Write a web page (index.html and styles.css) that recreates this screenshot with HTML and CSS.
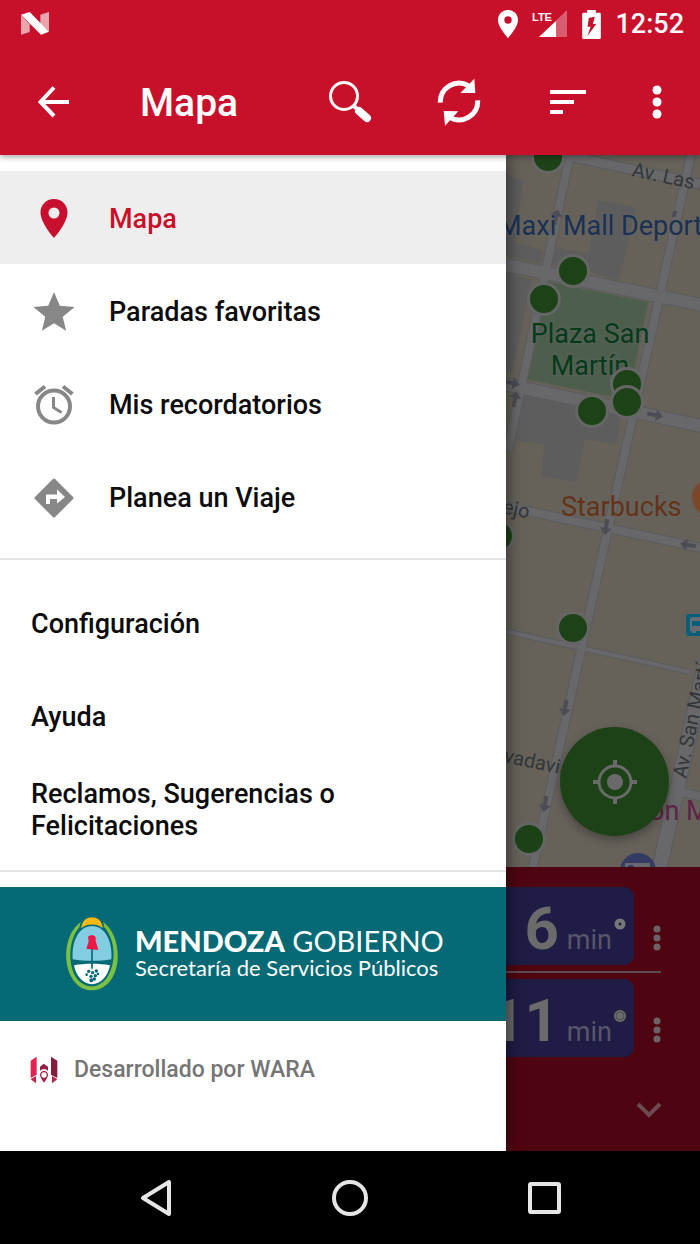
FILE: index.html
```html
<!DOCTYPE html>
<html lang="es">
<head>
<meta charset="UTF-8">
<meta name="viewport" content="width=device-width, initial-scale=1">
<title>Mapa</title>
<link rel="stylesheet" href="styles.css">
</head>
<body>
<header class="header">
  <div class="statusbar">
    <svg class="notif" width="28" height="24" viewBox="0 0 84 72" aria-hidden="true">
      <path d="M0 10 26 36V60L0 68Z M58 8 84 0V58L58 36Z" fill="#fff" opacity=".62"/>
      <path d="M0 8 26 0 84 59 60 68Z" fill="#fff"/>
    </svg>
    <div class="status-icons">
      <svg width="20" height="28" viewBox="0 0 60 84" aria-hidden="true"><path fill="#fff" fill-rule="evenodd" d="M30 0C13 0 0 13 0 30c0 22 30 54 30 54s30-32 30-54C60 13 47 0 30 0zm0 19a11 11 0 1 1 0 22 11 11 0 0 1 0-22z"/></svg>
      <svg class="signal" width="36" height="28" viewBox="0 0 36 28" aria-hidden="true">
        <path d="M35 0V27H7Z" fill="#fff" opacity=".32"/>
        <path d="M24 11V27H7Z" fill="#fff"/>
        <text class="lte" x="0" y="11">LTE</text>
      </svg>
      <svg width="19" height="29" viewBox="0 0 56 87" aria-hidden="true"><path fill="#fff" fill-rule="evenodd" d="M15 0H41V8H52Q56 8 56 12V83Q56 87 52 87H4Q0 87 0 83V12Q0 8 4 8H15ZM38 20 20 24 16 50H25L16 78 42 42H32Z"/></svg>
      <span class="clock">12:52</span>
    </div>
  </div>
  <div class="toolbar">
    <button class="tool back" type="button" aria-label="Volver">
      <svg width="32" height="32" viewBox="0 0 32 32"><path d="M31 16H3M16 1.500 2.500 16 16 30" fill="none" stroke="#fff" stroke-width="4"/></svg>
    </button>
    <h1 class="title">Mapa</h1>
    <button class="tool" type="button" aria-label="Buscar">
      <svg width="44" height="44" viewBox="0 0 44 44"><circle cx="16" cy="16" r="13.500" fill="none" stroke="#fff" stroke-width="3"/><path d="M25 25 30 30" stroke="#fff" stroke-width="4"/><path d="M31 31 39 38" stroke="#fff" stroke-width="8" stroke-linecap="round"/></svg>
    </button>
    <button class="tool" type="button" aria-label="Actualizar">
      <svg width="44" height="48" viewBox="0 0 132 144"><path d="M10 74A56 56 0 0 1 94 23M122 67A56 56 0 0 1 38 118" fill="none" stroke="#fff" stroke-width="15"/><path d="M112 2 115 45H70Z M20 99 64 100 24 143Z" fill="#fff"/></svg>
    </button>
    <button class="tool" type="button" aria-label="Ordenar">
      <svg width="36" height="26" viewBox="0 0 36 26"><path d="M0 3H36M0 13H24M0 23H13" stroke="#fff" stroke-width="4"/></svg>
    </button>
    <button class="tool more" type="button" aria-label="Más opciones">
      <svg width="10" height="34" viewBox="0 0 10 34" fill="#fff"><circle cx="5" cy="5" r="4.500"/><circle cx="5" cy="17" r="4.500"/><circle cx="5" cy="29" r="4.500"/></svg>
    </button>
  </div>
</header>

<main class="content">
  <aside class="drawer">
    <nav class="menu">
      <a class="item active" href="#mapa">
        <svg class="icon" viewBox="0 0 42 42"><path fill="#c8102e" fill-rule="evenodd" d="M21 1C13 1 7.500 7 7.500 14.500 7.500 25 21 40 21 40S34.500 25 34.500 14.500C34.500 7 29 1 21 1zm0 8.500a5.500 5.500 0 1 1 0 11 5.500 5.500 0 0 1 0-11z"/></svg>
        Mapa
      </a>
      <a class="item" href="#favoritas">
        <svg class="icon" viewBox="0 0 24 24"><path fill="#878787" d="M12 18.400 18.900 22.700 17 14.700 23.800 9.100 15.300 8.400 12 .5 8.700 8.400.2 9.100 7 14.700 5.100 22.700Z"/></svg>
        Paradas favoritas
      </a>
      <a class="item" href="#recordatorios">
        <svg class="icon" viewBox="0 0 42 42" fill="none" stroke="#878787"><circle cx="21" cy="22.500" r="16" stroke-width="4"/><path d="M20.500 13V23.500L28.500 28.500" stroke-width="3"/><path d="M2.500 10 12 2.500M39.500 10 30 2.500" stroke-width="4"/></svg>
        Mis recordatorios
      </a>
      <a class="item" href="#viaje">
        <svg class="icon" viewBox="0 0 42 42"><path d="M21 3 39 21 21 39 3 21Z" fill="#878787" stroke="#878787" stroke-width="3" stroke-linejoin="round"/><path d="M13 27V17.500H24V12.500L32 20 24 26.500V22H17V27Z" fill="#fff"/></svg>
        Planea un Viaje
      </a>
    </nav>
    <nav class="menu">
      <a class="item" href="#configuracion">Configuración</a>
      <a class="item" href="#ayuda">Ayuda</a>
      <a class="item" href="#reclamos">Reclamos, Sugerencias o Felicitaciones</a>
    </nav>
    <div class="banner">
      <svg class="emblem" width="54" height="76" viewBox="0 0 160 228" aria-hidden="true">
        <path d="M48 36C50 14 64 4 80 4s30 10 32 32C94 22 66 22 48 36z" fill="#fdb913"/>
        <path d="M46 18C-8 58-10 156 30 200c28 32 74 30 102-2C170 154 166 58 114 18L116 32C152 72 154 142 124 186c-24 32-62 34-88 4C6 152 8 72 42 34Z" fill="#7ac143"/>
        <path d="M22 130C18 74 42 30 80 30s62 44 58 100C104 136 58 136 22 130z" fill="#82cde2"/>
        <path d="M26 148C60 142 100 142 134 148 128 180 106 205 80 205S32 180 26 148z" fill="#fff"/>
        <path d="M80 96V158" stroke="#056a75" stroke-width="5"/>
        <path d="M68 62Q80 52 91 63V74L99 102 63 98 70 76Z" fill="#ed1846"/>
        <g fill="#056a75"><circle cx="70" cy="166" r="5"/><circle cx="82" cy="170" r="5"/><circle cx="93" cy="165" r="5"/><circle cx="64" cy="176" r="4"/><circle cx="77" cy="181" r="5"/><circle cx="90" cy="179" r="5"/><circle cx="98" cy="174" r="4"/><circle cx="87" cy="189" r="5"/><circle cx="78" cy="193" r="6"/></g>
      </svg>
      <div>
        <p class="banner-title"><b>MENDOZA</b> GOBIERNO</p>
        <p class="banner-sub">Secretaría de Servicios Públicos</p>
      </div>
    </div>
    <footer class="credit">
      <svg width="28" height="28" viewBox="0 0 84 84" aria-hidden="true">
        <path d="M2 14 20 2V56L2 66Z" fill="#e3234f"/>
        <path d="M2 70 18 60V82Z" fill="#c81f45"/>
        <path d="M63 2 82 14V66L63 56Z" fill="#841d3a"/>
        <path d="M82 70 66 60V82Z" fill="#b52045"/>
        <path d="M30 32 41 23 54 32V44Q42 34 30 44Z" fill="#932040"/>
        <path fill-rule="evenodd" d="M42 45c-8 0-12 6-12 12 0 8 12 23 12 23s12-15 12-23c0-6-4-12-12-12zm0 4a8 8 0 1 1 0 16 8 8 0 0 1 0-16z" fill="#a42042"/>
      </svg>
      Desarrollado por WARA
    </footer>
  </aside>

  <section class="behind">
    <div class="map">
      <svg class="tiles" viewBox="506 155 194 712" preserveAspectRatio="xMinYMin slice">
        <rect x="0" y="0" width="1400" height="1800" fill="#66625a"/>
        <g fill="#5d5d5d">
          <path d="M506 175 523 181 515 243 543 250 541 263 506 256Z"/>
          <path d="M598 200 636 208 619 280 586 271 550 264 553 247 589 254Z"/>
          <path d="M506 273 532 280 512 372 506 370Z"/>
          <path d="M522 392 621 413 617 444 585 439 576 482 542 476 544 444 512 440Z"/>
        </g>
        <path d="M544 281 648 302 628 400 525 379Z" fill="#4e5e4d"/>
        <g fill="none" stroke="#5a5b5e">
          <path d="M560 154 700 184" stroke-width="11"/>
          <path d="M570 155 508 450M692 150 533 867" stroke-width="10"/>
          <path d="M506 265 702 305M504 384 702 426" stroke-width="14"/>
          <path d="M504 506 702 548" stroke-width="10"/>
          <path d="M504 631 690 672" stroke-width="6"/>
          <path d="M706 660 659 870" stroke-width="16"/>
          <path d="M678 791 702 797" stroke-width="10"/>
        </g>
        <g fill="none" stroke="#68686a">
          <path d="M560 154 700 184" stroke-width="9"/>
          <path d="M570 155 508 450M692 150 533 867" stroke-width="8"/>
          <path d="M506 265 702 305M504 384 702 426" stroke-width="12"/>
          <path d="M504 506 702 548" stroke-width="8"/>
          <path d="M504 631 690 672" stroke-width="4"/>
          <path d="M706 660 659 870" stroke-width="14"/>
          <path d="M678 791 702 797" stroke-width="8"/>
        </g>
        <defs><path id="arrow" d="M-8-2H1V-6L8 0 1 6V2H-8Z"/></defs>
        <g fill="#4c4c54">
          <use href="#arrow" transform="translate(512 383) rotate(12)"/>
          <use href="#arrow" transform="translate(515 399) rotate(-78)"/>
          <use href="#arrow" transform="translate(556 217) rotate(-78)"/>
          <use href="#arrow" transform="translate(655 415) rotate(12)"/>
          <use href="#arrow" transform="translate(606 527) rotate(100)"/>
          <use href="#arrow" transform="translate(688 545) rotate(190)"/>
          <use href="#arrow" transform="translate(565 708) rotate(100)"/>
          <use href="#arrow" transform="translate(545 804) rotate(100)"/>
          <path d="M673 211H677L676 217H672Z"/>
        </g>
        <text class="street" transform="translate(631 176) rotate(12)">Av. Las Heras</text>
        <text class="street" transform="translate(502 513) rotate(12)">ejo</text>
        <text class="street" transform="translate(503 762) rotate(12)">vadavia</text>
        <text class="street" transform="translate(686 779) rotate(-78)">Av. San Martín</text>
        <text class="place mall" x="498" y="235">Maxi Mall Deport</text>
        <text class="place park" x="590" y="343">Plaza San</text>
        <text class="place park" x="590" y="375">Martín</text>
        <text class="place cafe" x="561" y="516">Starbucks</text>
        <text class="place hotel" x="649" y="820">on M</text>
        <path d="M708 480A17 17 0 0 0 692 496C692 507 699 512 704 518V480Z" fill="#7a472a"/>
        <rect x="686" y="614" width="24" height="22" rx="3" fill="#005f7d"/>
        <path d="M690 620Q690 617 693 617H708V631H696V633H692V631H690Z" fill="#696b6c"/>
        <path d="M692 621H706V626H692Z" fill="#005f7d"/>
        <circle cx="638" cy="871" r="18" fill="#363b63"/>
        <path d="M625 863H650V870H635A4 4 0 0 0 627 868V870H625Z" fill="#68696f"/>
        <g fill="#1d4218" stroke="#676666" stroke-width="3">
          <circle cx="548" cy="157" r="15.500"/>
          <circle cx="573" cy="271" r="15.500"/>
          <circle cx="544" cy="299" r="15.500"/>
          <circle cx="627" cy="384" r="15.500"/>
          <circle cx="627" cy="402" r="15.500"/>
          <circle cx="592" cy="411" r="15.500"/>
          <circle cx="498" cy="536" r="15.500"/>
          <circle cx="573" cy="628" r="15.500"/>
          <circle cx="529" cy="839" r="15.500"/>
        </g>
      </svg>
      <button class="locate" type="button" aria-label="Mi ubicación">
        <svg width="44" height="44" viewBox="0 0 44 44" fill="none" stroke="#696a69"><circle cx="22" cy="22" r="16" stroke-width="3"/><path d="M22 0V7M22 37V44M0 22H7M37 22H44" stroke-width="4"/><circle cx="22" cy="22" r="8" fill="#696a69" stroke="none"/></svg>
      </button>
    </div>
    <div class="arrivals">
      <div class="arrival">
        <div class="eta">
          <span class="number">6</span>
          <span class="unit">min</span>
          <svg class="live" width="12" height="12" viewBox="0 0 12 12"><circle cx="6" cy="6" r="3.500" fill="none" stroke="#777" stroke-width="4"/></svg>
        </div>
        <button class="options" type="button" aria-label="Opciones">
          <svg width="8" height="26" viewBox="0 0 8 26" fill="#6b6266"><circle cx="4" cy="4" r="3.500"/><circle cx="4" cy="13" r="3.500"/><circle cx="4" cy="22" r="3.500"/></svg>
        </button>
      </div>
      <hr class="line">
      <div class="arrival">
        <div class="eta">
          <span class="number">11</span>
          <span class="unit">min</span>
          <svg class="live" width="12" height="12" viewBox="0 0 12 12"><circle cx="6" cy="6" r="6" fill="#6b6b6b"/><circle cx="6" cy="6" r="4" fill="none" stroke="#4a4a54" stroke-width="1"/></svg>
        </div>
        <button class="options" type="button" aria-label="Opciones">
          <svg width="8" height="26" viewBox="0 0 8 26" fill="#6b6266"><circle cx="4" cy="4" r="3.500"/><circle cx="4" cy="13" r="3.500"/><circle cx="4" cy="22" r="3.500"/></svg>
        </button>
      </div>
      <button class="collapse" type="button" aria-label="Ocultar">
        <svg width="26" height="16" viewBox="0 0 26 16"><path d="M2 2 13 13 24 2" fill="none" stroke="#6b4a50" stroke-width="4"/></svg>
      </button>
    </div>
  </section>
</main>

<div class="navbar">
  <button type="button" aria-label="Atrás"><svg width="36" height="40" viewBox="0 0 36 40"><path d="M5 20 31 4V36Z" fill="none" stroke="#e6e6e6" stroke-width="4" stroke-linejoin="round"/></svg></button>
  <button type="button" aria-label="Inicio"><svg width="36" height="40" viewBox="0 0 36 40"><circle cx="18" cy="20" r="16" fill="none" stroke="#e6e6e6" stroke-width="4"/></svg></button>
  <button type="button" aria-label="Recientes"><svg width="36" height="40" viewBox="0 0 36 40"><rect x="4" y="6" width="29" height="28" rx="1" fill="none" stroke="#e6e6e6" stroke-width="4"/></svg></button>
</div>
</body>
</html>
```
FILE: styles.css
```css
*{box-sizing:border-box;}
body{margin:0;min-height:100vh;display:flex;flex-direction:column;font-family:Roboto,sans-serif;background:#000;}
svg{display:block;flex:none;}
button{display:flex;align-items:center;justify-content:center;padding:0;border:none;background:none;cursor:pointer;}

/* header */
.header{position:relative;z-index:2;background:#c8102b;color:#fff;box-shadow:0 2px 6px rgba(0,0,0,0.35);}
.statusbar{height:48px;padding:0 16px 0 21px;display:flex;align-items:center;justify-content:space-between;}
.status-icons{display:flex;align-items:center;gap:14px;}
.lte{font:bold 11px "Liberation Sans",sans-serif;fill:#fff;}
.clock{font-size:27px;font-weight:500;line-height:48px;}
.toolbar{height:107px;padding-right:8px;display:flex;align-items:center;}
.tool{width:109px;height:80px;}
.back{width:107px;}
.title{flex:1;margin:0;padding:2px 0 0 33px;font-size:39px;font-weight:500;line-height:48px;}
.more{width:70px;}

/* drawer */
.content{flex:1;display:flex;}
.drawer{position:relative;z-index:1;flex:0 1 506px;display:flex;flex-direction:column;background:#fff;box-shadow:0 0 16px rgba(0,0,0,0.6);}
.menu{padding:16px 0 15px;border-bottom:2px solid #e4e4e4;}
.item{display:flex;align-items:center;gap:34px;min-height:93px;padding:2px 120px 0 31px;color:#0c0c0c;font-size:27px;font-weight:500;line-height:32px;text-decoration:none;}
.item .icon{width:42px;height:42px;margin-left:2px;}
.active{background:#eee;color:#c8102b;}
.banner{display:flex;align-items:center;gap:16px;min-height:134px;margin-top:15px;padding:0 32px 0 65px;background:#056a75;color:#fff;font-family:Lato,sans-serif;}
.banner p{margin:0;white-space:nowrap;}
.banner-title{font-size:29px;line-height:28px;}
.banner-title b{font-weight:900;}
.banner-sub{font-size:22px;line-height:26px;}
.credit{display:flex;align-items:center;gap:16px;padding:33px 30px;color:#757575;font-size:23px;font-weight:500;line-height:32px;}

/* dimmed map and arrivals */
.behind{flex:1;min-width:0;display:flex;flex-direction:column;}
.map{position:relative;flex:1;display:flex;overflow:hidden;background:#66625a;}
.tiles{flex:1;width:100%;min-width:0;}
.place{font-size:27px;stroke:#66666655;stroke-width:3px;paint-order:stroke;}
.street{font-size:20px;fill:#333638;}
.mall{fill:#1a3154;}
.park{fill:#053a1b;text-anchor:middle;}
.cafe{fill:#643317;}
.hotel{fill:#5e2246;}
.locate{position:absolute;right:31px;bottom:31px;width:109px;height:109px;border-radius:50%;background:#1d4218;box-shadow:0 4px 10px rgba(0,0,0,0.3);}
.arrivals{padding:20px 0 24px;background:#4f0511;}
.arrival{display:flex;}
.eta{flex:1;min-width:0;height:78px;padding-right:8px;display:flex;align-items:baseline;justify-content:flex-end;overflow:hidden;border-radius:0 10px 10px 0;background:#1f1c45;color:#6b6b6b;line-height:84px;}
.number{font-size:60px;font-weight:700;margin-right:8px;}
.unit{font-size:27px;color:#57566b;}
.live{align-self:flex-start;margin:31px 0 0 2px;}
.options{width:46px;margin-right:20px;padding-top:24px;}
.line{height:2px;margin:6px 39px 6px 0;border:none;background:#5f4a4d;}
.collapse{margin:36px 32px 0 auto;width:38px;height:34px;}

/* navigation bar */
.navbar{height:93px;display:flex;justify-content:center;background:#000;}
.navbar button{width:194px;}
```
